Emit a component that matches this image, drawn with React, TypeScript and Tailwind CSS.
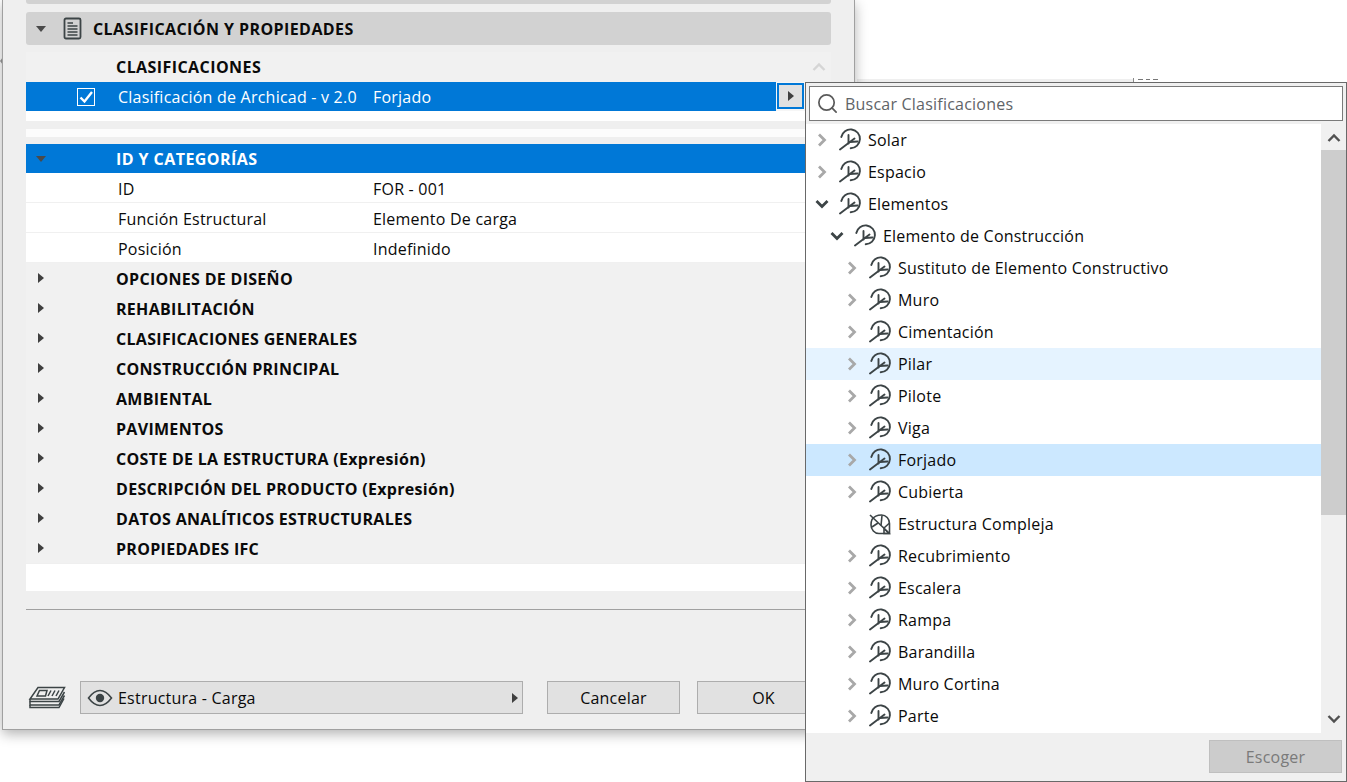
import { Search } from "lucide-react";

const font = "font-['Open_Sans',sans-serif]";

const treeRows = [
  { name: "Solar", depth: 0, state: "closed" },
  { name: "Espacio", depth: 0, state: "closed" },
  { name: "Elementos", depth: 0, state: "open" },
  { name: "Elemento de Construcción", depth: 1, state: "open" },
  { name: "Sustituto de Elemento Constructivo", depth: 2, state: "closed" },
  { name: "Muro", depth: 2, state: "closed" },
  { name: "Cimentación", depth: 2, state: "closed" },
  { name: "Pilar", depth: 2, state: "closed", bg: "bg-[#e5f3ff]" },
  { name: "Pilote", depth: 2, state: "closed" },
  { name: "Viga", depth: 2, state: "closed" },
  { name: "Forjado", depth: 2, state: "closed", bg: "bg-[#cce8ff]" },
  { name: "Cubierta", depth: 2, state: "closed" },
  { name: "Estructura Compleja", depth: 2, state: "leaf" },
  { name: "Recubrimiento", depth: 2, state: "closed" },
  { name: "Escalera", depth: 2, state: "closed" },
  { name: "Rampa", depth: 2, state: "closed" },
  { name: "Barandilla", depth: 2, state: "closed" },
  { name: "Muro Cortina", depth: 2, state: "closed" },
  { name: "Parte", depth: 2, state: "closed" },
];

const groups = [
  "OPCIONES DE DISEÑO",
  "REHABILITACIÓN",
  "CLASIFICACIONES GENERALES",
  "CONSTRUCCIÓN PRINCIPAL",
  "AMBIENTAL",
  "PAVIMENTOS",
  "COSTE DE LA ESTRUCTURA (Expresión)",
  "DESCRIPCIÓN DEL PRODUCTO (Expresión)",
  "DATOS ANALÍTICOS ESTRUCTURALES",
  "PROPIEDADES IFC",
];

const props = [
  ["ID", "FOR - 001"],
  ["Función Estructural", "Elemento De carga"],
  ["Posición", "Indefinido"],
];

function BranchIcon() {
  return (
    <svg width="24" height="24" viewBox="0 0 24 24" fill="none" stroke="#3c4446" strokeWidth="1.9" strokeLinecap="round">
      <path d="M2.3 9 A9.4 9.4 0 1 1 11.7 20.2" />
      <path d="M1 21.5 L15.5 10.5" />
      <path d="M9.5 7 V15.5" />
      <path d="M11 14 L18.5 13.5" />
    </svg>
  );
}

function LeafIcon() {
  return (
    <svg width="24" height="24" viewBox="0 0 24 24" fill="none" stroke="#3c4446" strokeWidth="1.6">
      <path d="M1 3 L20.5 21.5" />
      <path d="M3 7.5 C5 4.5 9 3 12.5 3 C17 3 20.5 7 20.5 11.5 V21.5 H10 C5.5 21.5 2 17.5 2 13 C2 11 2.3 9 3 7.5 Z" />
      <path d="M12 13.5 L13 3.5 M15 16 L20.5 11 M9 11 L3 15 M15 16.5 V21.5 H20 Z" />
    </svg>
  );
}

function Chevron({ state }: { state: string }) {
  if (state === "leaf") return <span className="w-[16px]" />;
  return state === "open" ? (
    <svg width="16" height="16" viewBox="0 0 16 16" fill="none" stroke="#3c4446" strokeWidth="2.8">
      <path d="M2.5 5 L8 10.5 L13.5 5" />
    </svg>
  ) : (
    <svg width="16" height="16" viewBox="0 0 16 16" fill="none" stroke="#a8a8a8" strokeWidth="2.8">
      <path d="M5 2.5 L10.5 8 L5 13.5" />
    </svg>
  );
}

function TriDown({ color = "#4a4a4a" }: { color?: string }) {
  return <span className="w-0 h-0 border-x-[5px] border-x-transparent border-t-[6px]" style={{ borderTopColor: color }} />;
}

function TriRight() {
  return <span className="w-0 h-0 border-y-[5px] border-y-transparent border-l-[6px] border-l-[#3f3f3f]" />;
}

function StackIcon() {
  return (
    <svg width="38" height="24" viewBox="0 0 38 24" fill="none" stroke="#3c4446" strokeWidth="1.5">
      <path d="M10 1.5 H36.5 L30 13 H2 Z" />
      <path d="M2 13 V15.5 H31 L36.5 6" />
      <path d="M2 15.5 V19 H31 L36.5 9.5" />
      <path d="M2 19 V21.5 H31 L36 12.5" />
      <path d="M11.5 4.5 H19 L17.5 10 H9 Z" />
      <path d="M23 4.5 L20 10 M27 4.5 L24 10 M31 4.5 L28 10" />
    </svg>
  );
}

function EyeIcon() {
  return (
    <svg width="26" height="18" viewBox="0 0 26 18" fill="none">
      <path d="M1.5 9 C6 3 10 1.5 13 1.5 C16 1.5 20 3 24.5 9 C20 15 16 16.5 13 16.5 C10 16.5 6 15 1.5 9 Z" stroke="#3c4446" strokeWidth="1.6" />
      <circle cx="13" cy="9" r="4.2" fill="#3c4446" />
    </svg>
  );
}

function DocIcon() {
  return (
    <svg width="20" height="24" viewBox="0 0 20 24" fill="none" stroke="#3c4446">
      <rect x="1.5" y="1.5" width="16" height="20" rx="1.5" strokeWidth="1.8" />
      <path d="M4.5 6 H10 M4.5 9 H14.5 M4.5 12 H14.5 M4.5 15 H14.5 M4.5 18 H14.5" strokeWidth="1.3" />
    </svg>
  );
}

export default function App() {
  return (
    <div className={`relative w-[1347px] h-[782px] overflow-hidden bg-white text-[16px] tracking-[0.22px] text-[#0a0a0a] ${font}`}>
      {/* ventana de detras, asoma por encima del selector */}
      <span className="absolute left-0 top-[57px] w-0 h-0 border-y-[4px] border-y-transparent border-r-[3px] border-r-[#9a9a9a]" />
      <div className="absolute left-[857px] top-[79px] w-[276px] h-[3px] bg-[#efefef]" />
      <div className="absolute left-[1133px] top-[78px] w-px h-[4px] bg-[#8a8a8a]" />
      <div className="absolute left-[1138px] top-[79px] flex gap-[3px]">
        <span className="w-[5px] h-px bg-[#777777]" />
        <span className="w-[4px] h-px bg-[#777777]" />
        <span className="w-[5px] h-px bg-[#777777]" />
      </div>

      {/* dialogo principal */}
      <div className="relative ml-[2px] w-[853px] h-[730px] border-x border-b border-[#a0a0a0] bg-[#efefef] shadow-[0_4px_12px_rgba(0,0,0,0.3)] flex flex-col pl-[23px] pr-[23px]">
        <div className="h-[4px] bg-[#d2d2d2] rounded-b-[3px]" />
        <div className="mt-[8px] h-[33px] bg-[#d2d2d2] rounded-[3px] flex items-center pl-[10px] shrink-0">
          <TriDown />
          <span className="ml-[17px] flex"><DocIcon /></span>
          <span className="ml-[10px] font-bold tracking-[0.42px]">CLASIFICACIÓN Y PROPIEDADES</span>
        </div>

        <div className="mt-[7px] h-[30px] flex items-center pl-[90px] pb-[1px] bg-[#f1f1f1] font-bold tracking-[0.43px] shrink-0">
          CLASIFICACIONES
          <svg className="ml-auto mr-[4px]" width="16" height="14" viewBox="0 0 16 14" fill="none" stroke="#d5d5d5" strokeWidth="2.4">
            <path d="M2.5 10 L8 4.5 L13.5 10" />
          </svg>
        </div>
        <div className="h-[29px] flex bg-[#f6f6f6] shrink-0">
          <div className="w-[750px] bg-[#0078d7] text-white flex items-center">
            <span className="ml-[51px] w-[18px] h-[18px] border border-white flex items-center justify-center">
              <svg width="16" height="16" viewBox="0 0 16 16" fill="none" stroke="#fff" strokeWidth="2.4">
                <path d="M2.5 8.5 L6.5 12.5 L14 3" />
              </svg>
            </span>
            <span className="ml-[23px] w-[255px]">Clasificación de Archicad - v 2.0</span>
            <span>Forjado</span>
          </div>
          <span className="ml-px mt-px w-[27px] h-[26px] bg-[#e1e1e1] border-2 border-[#0078d7] flex items-center justify-center">
            <TriRight />
          </span>
        </div>
        <div className="h-[10px] bg-white shrink-0" />
        <div className="h-[8px] shrink-0" />
        <div className="h-[8px] bg-[#fcfcfc] shrink-0" />
        <div className="h-[7px] shrink-0" />

        <div className="h-[29px] bg-[#0078d7] text-white flex items-center pl-[10px] font-bold shrink-0">
          <TriDown />
          <span className="ml-[70px] tracking-[0.43px]">ID Y CATEGORÍAS</span>
        </div>
        {props.map(([label, value]) => (
          <div key={label} className="h-[30px] bg-white border-b border-[#f0f0f0] flex items-center shrink-0">
            <span className="ml-[92px] w-[255px] translate-y-px">{label}</span>
            <span className="translate-y-px">{value}</span>
          </div>
        ))}
        {groups.map((g) => (
          <div key={g} className="h-[30px] bg-[#f1f1f1] flex items-center pl-[12px] font-bold shrink-0">
            <TriRight />
            <span className="ml-[72px] tracking-[0.3px] translate-y-px">{g}</span>
          </div>
        ))}
        <div className="mt-[1px] h-[27px] bg-white shrink-0" />
        <div className="mt-[18px] h-px bg-[#a0a0a0] shrink-0" />

        <div className="mt-[71px] flex items-center h-[33px] shrink-0">
          <span className="flex ml-[2px] mr-[14px]"><StackIcon /></span>
          <div className="w-[443px] h-[33px] bg-[#e1e1e1] border border-[#adadad] flex items-center pl-[6px] pr-[3px]">
            <EyeIcon />
            <span className="ml-[5px]">Estructura - Carga</span>
            <span className="ml-auto mr-[1px] flex"><TriRight /></span>
          </div>
          <button className="ml-[24px] w-[133px] h-[33px] bg-[#e1e1e1] border border-[#adadad]">Cancelar</button>
          <button className="ml-[17px] w-[133px] h-[33px] bg-[#e1e1e1] border border-[#adadad]">OK</button>
        </div>
      </div>

      {/* selector de clasificaciones */}
      <div className="absolute left-[805px] top-[82px] w-[542px] h-[700px] bg-[#f0f0f0] border border-[#696969] flex flex-col">
        <div className="mt-[3px] ml-[3px] w-[534px] h-[35px] bg-white border border-[#7a7a7a] flex items-center pl-[6px]">
          <Search size={23} color="#5a5a5a" strokeWidth={1.8} />
          <span className="ml-[6px] text-[#5f6468]">Buscar Clasificaciones</span>
        </div>
        <div className="mt-[3px] flex h-[609px]">
          <div className="w-[515px] bg-white flex flex-col">
            {treeRows.map((row) => (
              <div
                key={row.name}
                className={`h-[32px] shrink-0 flex items-center ${row.bg ?? ""} ${
                  row.depth === 0 ? "pl-[8px]" : row.depth === 1 ? "pl-[23px]" : "pl-[38px]"
                }`}
              >
                <Chevron state={row.state} />
                <span className="ml-[9px] flex">{row.state === "leaf" ? <LeafIcon /> : <BranchIcon />}</span>
                <span className="ml-[5px]">{row.name}</span>
              </div>
            ))}
          </div>
          <div className="flex-1 flex flex-col items-center">
            <svg className="mt-[7px]" width="16" height="14" viewBox="0 0 16 14" fill="none" stroke="#505050" strokeWidth="2.4">
              <path d="M2.5 10 L8 4.5 L13.5 10" />
            </svg>
            <div className="mt-[5px] w-full h-[365px] bg-[#cdcdcd]" />
            <svg className="mt-auto mb-[7px]" width="16" height="14" viewBox="0 0 16 14" fill="none" stroke="#505050" strokeWidth="2.4">
              <path d="M2.5 4 L8 9.5 L13.5 4" />
            </svg>
          </div>
        </div>
        <div className="mt-[7px] ml-[403px] w-[133px] h-[33px] bg-[#cccccc] border border-[#bfbfbf] text-[#7a7a7a] flex items-center justify-center">
          Escoger
        </div>
      </div>
    </div>
  );
}
